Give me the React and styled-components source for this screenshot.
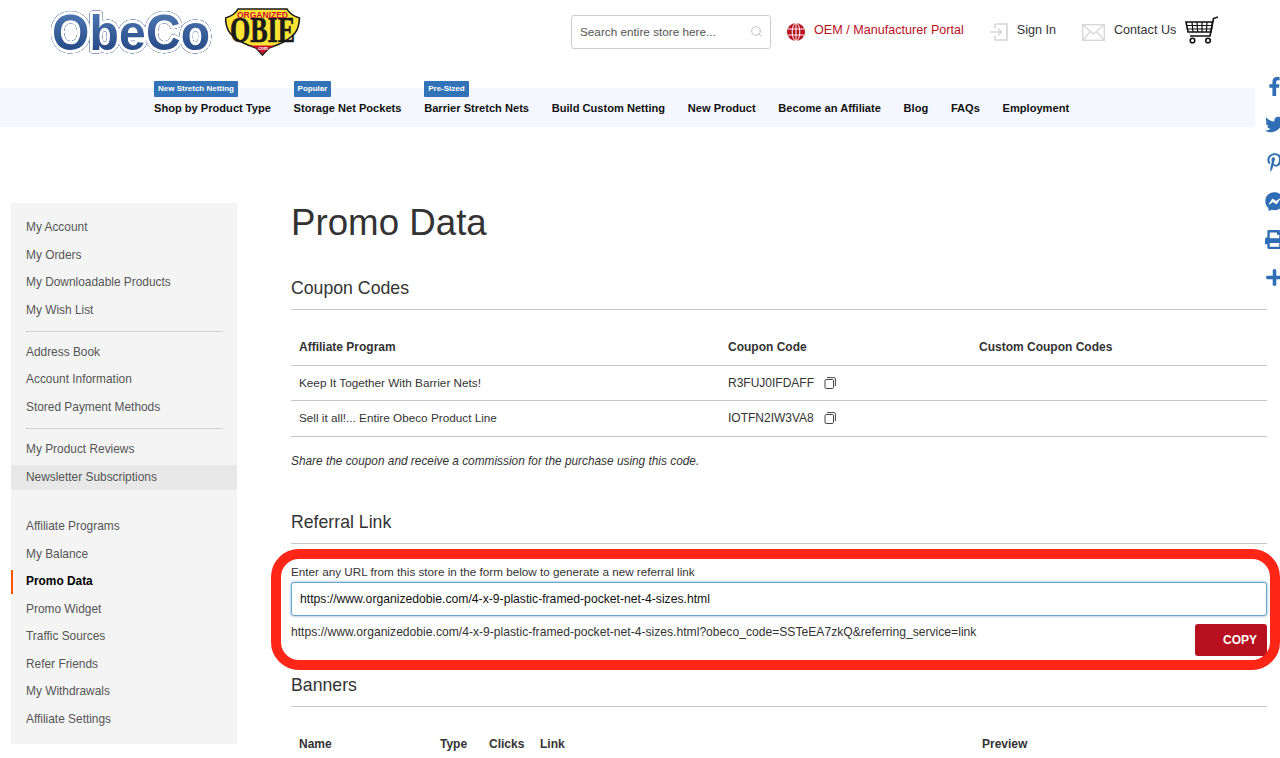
import React from 'react'
import styled, { createGlobalStyle } from 'styled-components'
import { Search } from 'lucide-react'
import { FaFacebookF, FaTwitter, FaPinterestP, FaFacebookMessenger, FaPrint, FaPlus } from 'react-icons/fa'

const GlobalStyle = createGlobalStyle`
  html, body { margin: 0; padding: 0; background: #fff; overflow: hidden; }
  body { font-family: "Liberation Sans", Arial, sans-serif; color: #333; }
  * { box-sizing: border-box; }
`

const Page = styled.div`
  position: relative;
  width: 1280px;
  height: 758px;
  overflow: hidden;
`

/* header */
const Header = styled.header`
  height: 88px;
  display: flex;
  align-items: flex-start;
  padding: 8px 0 0 50px;
`
const Logos = styled.div`
  display: flex;
  align-items: flex-start;
  gap: 13px;
  width: 521px;
`
const LogoMark = styled.svg`
  flex: none;
  overflow: visible;
  filter: drop-shadow(0 0 0.6px #4f6d9e) drop-shadow(0 0 0.5px #4f6d9e) drop-shadow(0 0 0.3px #4f6d9e);
`
const SearchBox = styled.div`
  width: 200px;
  height: 34px;
  margin-top: 7px;
  border: 1px solid #ccc;
  border-radius: 3px;
  display: flex;
  align-items: center;
  justify-content: space-between;
  padding: 0 7px 2px 8px;
  font-size: 11.75px;
  color: #555;
`
const HeaderLink = styled.a`
  display: flex;
  align-items: center;
  height: 34px;
  margin-top: 5px;
  margin-left: ${p => p.$ml}px;
  gap: ${p => p.$gap}px;
  font-size: 12.6px;
  white-space: nowrap;
  color: ${p => p.$color || '#333'};
  svg { flex: none; margin-top: 4px; }
`
const CartWrap = styled.div`
  margin-left: 8.5px;
  margin-top: 8px;
`

/* nav */
const NavBar = styled.nav`
  width: 1255px;
  height: 39px;
  background: #f4f7fd;
  display: flex;
  align-items: center;
  gap: 22.7px;
  padding: 0 0 0 154px;
`
const NavItem = styled.a`
  position: relative;
  font-size: 11.1px;
  font-weight: 700;
  color: #111;
  white-space: nowrap;
`
const NavBadge = styled.span`
  position: absolute;
  left: 0;
  top: -21px;
  height: 16px;
  line-height: 16px;
  padding: 0 4px;
  background: #3273b8;
  border-radius: 1px;
  color: #fff;
  font-size: 8px;
  font-weight: 700;
`

/* floating share icons */
const Social = styled.div`
  position: absolute;
  left: 1265px;
  top: 77px;
  display: flex;
  flex-direction: column;
  gap: 19.2px;
  color: #2f6db5;
  font-size: 19px;
  line-height: 0;
`

/* body */
const Columns = styled.div`
  display: flex;
  align-items: flex-start;
  padding: 76px 13px 0 11px;
`
const Sidebar = styled.aside`
  width: 226px;
  height: 541px;
  flex: none;
  background: #f4f4f4;
  padding: 11px 0;
  margin-right: 54px;
`
const MenuItem = styled.div`
  height: 27.5px;
  line-height: 27.5px;
  padding-left: 15px;
  font-size: 11.9px;
  color: #555;
`
const MenuItemHover = styled(MenuItem)`
  height: 24.5px;
  line-height: 24.5px;
  margin: 1.5px 0;
  background: #e8e8e8;
`
const MenuItemCurrent = styled(MenuItem)`
  height: 24.5px;
  line-height: 23.5px;
  margin: 1.5px 0;
  padding-left: 13px;
  border-left: 2px solid #ff5501;
  color: #000;
  font-weight: 700;
`
const MenuRule = styled.hr`
  border: 0;
  border-top: 1px solid #d1d1d1;
  margin: 6.8px 14px 7.2px 15px;
`
const MenuGap = styled.div`
  height: 21.7px;
`

const Main = styled.main`
  flex: 1;
  min-width: 0;
`
const Title = styled.h1`
  margin: 0 0 37px;
  height: 38px;
  line-height: 40px;
  font-size: 36.7px;
  font-weight: 400;
  color: #333;
`
const SectionTitle = styled.h2`
  margin: ${p => p.$mt || 0}px 0 0;
  height: 32px;
  line-height: 20px;
  font-size: 17.7px;
  font-weight: 400;
  color: #333;
  border-bottom: 1px solid #c6c6c6;
`
const Table = styled.table`
  width: 100%;
  border-collapse: collapse;
  table-layout: fixed;
  font-size: 11.76px;
  color: #333;
  margin-top: ${p => p.$mt || 0}px;
`
const Th = styled.th`
  text-align: left;
  height: 37px;
  padding: 1px 8px 0;
  font-size: 12px;
  font-weight: 700;
  color: #333;
`
const HeadRow = styled.tr`
  border-bottom: ${p => (p.$flush ? 'none' : '1px solid #c6c6c6')};
`
const Row = styled.tr`
  border-bottom: 1px solid #c6c6c6;
`
const Td = styled.td`
  height: ${p => p.$h}px;
  padding: 0 8px ${p => p.$h - 35}px;
`
const CodeCell = styled.span`
  display: inline-flex;
  align-items: center;
  gap: 10px;
  font-size: 12px;
`
const Note = styled.p`
  margin: 17px 0 0;
  height: 14px;
  line-height: 14px;
  font-size: 11.85px;
  font-style: italic;
  color: #333;
`
const Label = styled.div`
  margin-top: 21px;
  height: 14px;
  line-height: 14px;
  font-size: 11.7px;
  color: #333;
`
const UrlInput = styled.input`
  display: block;
  width: 100%;
  height: 34px;
  margin-top: 3px;
  padding: 0 8px;
  border: 1px solid #6aa7c9;
  border-radius: 3px;
  outline: none;
  box-shadow: 0 0 3px rgba(82, 142, 190, 0.8);
  font-family: inherit;
  font-size: 12.18px;
  color: #111;
`
const ResultRow = styled.div`
  display: flex;
  justify-content: space-between;
  align-items: flex-start;
  margin-top: 8px;
  height: 32px;
  font-size: 12.14px;
  color: #333;
`
const ResultText = styled.div`
  line-height: 16px;
  white-space: nowrap;
`
const CopyButton = styled.button`
  width: 72px;
  height: 32px;
  border: 0;
  border-radius: 3px;
  background: #b8101f;
  color: #fff;
  font-family: inherit;
  font-size: 12px;
  font-weight: 700;
  text-align: right;
  padding: 0 10px 0 0;
`

/* annotation drawn over the screenshot */
const Highlight = styled.div`
  position: absolute;
  left: 271px;
  top: 549px;
  width: 1009px;
  height: 121px;
  border: 10px solid #ff2517;
  border-radius: 28px;
  pointer-events: none;
`

const ObecoLogo = () => (
  <LogoMark width="162" height="46" viewBox="0 0 162 46">
    <defs>
      <linearGradient id="obecoFill" x1="0" y1="0" x2="0" y2="1">
        <stop offset="0" stopColor="#5580bb" />
        <stop offset="1" stopColor="#1d3f7c" />
      </linearGradient>
    </defs>
    <text
      x="2"
      y="40"
      transform="scale(1 1.06)"
      fontFamily="Liberation Sans"
      fontWeight="700"
      fontSize="48"
      letterSpacing="0.2"
      fill="url(#obecoFill)"
      stroke="#fff"
      strokeWidth="6"
      strokeLinejoin="round"
      paintOrder="stroke"
    >
      ObeCo
    </text>
  </LogoMark>
)

const ObieLogo = () => (
  <svg width="76" height="48" viewBox="0 0 76 48">
    <path d="M13 1 L62 1 Q65 7 74.5 10 Q74 20 70 25 Q63 33 52 37 L44 40 L37.5 47 L31 40 L23 37 Q12 33 5 25 Q1 20 .5 10 Q10 7 13 1 Z" fill="#ffe335" stroke="#1a1a1a" strokeWidth="1.6" />
    <text x="37.5" y="24.3" transform="scale(1 1.4)" textAnchor="middle" fontFamily="Liberation Serif" fontWeight="700" fontSize="26" fill="#1a1a1a" stroke="#1a1a1a" strokeWidth="0.5">OBIE</text>
    <text x="37.5" y="10.2" textAnchor="middle" fontFamily="Liberation Sans" fontWeight="700" fontSize="8.5" fill="#c8102e">ORGANIZED</text>
    <path d="M25 37.5 L50 37.5 L44 40 L37.5 46 L31 40 Z" fill="#c8102e" />
    <text x="37.5" y="42" textAnchor="middle" fontFamily="Liberation Sans" fontWeight="700" fontSize="4.5" fill="#fff">.com</text>
  </svg>
)

const GlobeIcon = () => (
  <svg width="18" height="18" viewBox="0 0 18 18" fill="none">
    <circle cx="9" cy="9" r="9" fill="#b8101f" />
    <g stroke="#fff" strokeWidth="1">
      <ellipse cx="9" cy="9" rx="3.8" ry="9" />
      <path d="M9 0V18M1 6H17M1 12H17" />
    </g>
  </svg>
)

const SignInIcon = () => (
  <svg width="18" height="18" viewBox="0 0 18 18" fill="none" stroke="#d6d6d6" strokeWidth="1.6">
    <path d="M5 1H17V17H5V12.5M5 5.5V1" />
    <path d="M0 9H11M8 5.5L11.5 9L8 12.5" />
  </svg>
)

const MailIcon = () => (
  <svg width="23" height="17" viewBox="0 0 23 17" fill="none" stroke="#d6d6d6" strokeWidth="1.3">
    <rect x="0.7" y="0.7" width="21.6" height="15.6" />
    <path d="M1 1L11.5 10L22 1M1 16L8.5 7.5M22 16L14.5 7.5" />
  </svg>
)

const CartIcon = () => (
  <svg width="33" height="28" viewBox="0 0 33 28" fill="none" stroke="#111" strokeWidth="1.6">
    <path d="M33 1L28.5 2.5L25 20H5" />
    <path d="M1 6H27.5L26 16H3Z" />
    <path d="M1.6 9.5H27M2.4 13H26.4M7 6L8 16M12 6L12.6 16M17 6L17 16M22 6L21.4 16" strokeWidth="1.2" />
    <circle cx="7.5" cy="24.5" r="2.3" />
    <circle cx="23" cy="24.5" r="2.3" />
  </svg>
)

const CopyIcon = () => (
  <svg width="12" height="12" viewBox="0 0 12 12" fill="none" stroke="#444" strokeWidth="1">
    <rect x="1" y="2.5" width="8.5" height="9" rx="1.2" />
    <path d="M3 0.6H10.2Q11.4 0.6 11.4 1.8V9" />
  </svg>
)

const navItems = [
  { label: 'Shop by Product Type', badge: 'New Stretch Netting' },
  { label: 'Storage Net Pockets', badge: 'Popular' },
  { label: 'Barrier Stretch Nets', badge: 'Pre-Sized' },
  { label: 'Build Custom Netting' },
  { label: 'New Product' },
  { label: 'Become an Affiliate' },
  { label: 'Blog' },
  { label: 'FAQs' },
  { label: 'Employment' },
]

const coupons = [
  { name: 'Keep It Together With Barrier Nets!', code: 'R3FUJ0IFDAFF', h: 35 },
  { name: 'Sell it all!... Entire Obeco Product Line', code: 'IOTFN2IW3VA8', h: 36 },
]

const url = 'https://www.organizedobie.com/4-x-9-plastic-framed-pocket-net-4-sizes.html'

export default function App() {
  return (
    <Page>
      <GlobalStyle />
      <Header>
        <Logos>
          <ObecoLogo />
          <ObieLogo />
        </Logos>
        <SearchBox>
          Search entire store here...
          <Search size={13} color="#b5b5b5" strokeWidth={1.5} />
        </SearchBox>
        <HeaderLink $ml={16} $gap={9} $color="#b8101f"><GlobeIcon />OEM / Manufacturer Portal</HeaderLink>
        <HeaderLink $ml={26} $gap={9}><SignInIcon />Sign In</HeaderLink>
        <HeaderLink $ml={26} $gap={9}><MailIcon />Contact Us</HeaderLink>
        <CartWrap><CartIcon /></CartWrap>
      </Header>

      <NavBar>
        {navItems.map(item => (
          <NavItem key={item.label}>
            {item.badge && <NavBadge>{item.badge}</NavBadge>}
            {item.label}
          </NavItem>
        ))}
      </NavBar>

      <Social>
        <FaFacebookF />
        <FaTwitter />
        <FaPinterestP />
        <FaFacebookMessenger />
        <FaPrint />
        <FaPlus />
      </Social>

      <Columns>
        <Sidebar>
          <MenuItem>My Account</MenuItem>
          <MenuItem>My Orders</MenuItem>
          <MenuItem>My Downloadable Products</MenuItem>
          <MenuItem>My Wish List</MenuItem>
          <MenuRule />
          <MenuItem>Address Book</MenuItem>
          <MenuItem>Account Information</MenuItem>
          <MenuItem>Stored Payment Methods</MenuItem>
          <MenuRule />
          <MenuItem>My Product Reviews</MenuItem>
          <MenuItemHover>Newsletter Subscriptions</MenuItemHover>
          <MenuGap />
          <MenuItem>Affiliate Programs</MenuItem>
          <MenuItem>My Balance</MenuItem>
          <MenuItemCurrent>Promo Data</MenuItemCurrent>
          <MenuItem>Promo Widget</MenuItem>
          <MenuItem>Traffic Sources</MenuItem>
          <MenuItem>Refer Friends</MenuItem>
          <MenuItem>My Withdrawals</MenuItem>
          <MenuItem>Affiliate Settings</MenuItem>
        </Sidebar>

        <Main>
          <Title>Promo Data</Title>
          <SectionTitle>Coupon Codes</SectionTitle>
          <Table $mt={18}>
            <colgroup>
              <col width="429" />
              <col width="251" />
              <col />
            </colgroup>
            <thead>
              <HeadRow>
                <Th>Affiliate Program</Th>
                <Th>Coupon Code</Th>
                <Th>Custom Coupon Codes</Th>
              </HeadRow>
            </thead>
            <tbody>
              {coupons.map(c => (
                <Row key={c.code}>
                  <Td $h={c.h}>{c.name}</Td>
                  <Td $h={c.h}>
                    <CodeCell>{c.code}<CopyIcon /></CodeCell>
                  </Td>
                  <Td $h={c.h} />
                </Row>
              ))}
            </tbody>
          </Table>
          <Note>Share the coupon and receive a commission for the purchase using this code.</Note>

          <SectionTitle $mt={44}>Referral Link</SectionTitle>
          <Label>Enter any URL from this store in the form below to generate a new referral link</Label>
          <UrlInput readOnly value={url} />
          <ResultRow>
            <ResultText>{url}?obeco_code=SSTeEA7zkQ&referring_service=link</ResultText>
            <CopyButton>COPY</CopyButton>
          </ResultRow>

          <SectionTitle $mt={19}>Banners</SectionTitle>
          <Table $mt={18}>
            <colgroup>
              <col width="141" />
              <col width="49" />
              <col width="51" />
              <col width="442" />
              <col />
            </colgroup>
            <thead>
              <HeadRow $flush>
                <Th>Name</Th>
                <Th>Type</Th>
                <Th>Clicks</Th>
                <Th>Link</Th>
                <Th>Preview</Th>
              </HeadRow>
            </thead>
          </Table>
        </Main>
      </Columns>

      <Highlight />
    </Page>
  )
}
